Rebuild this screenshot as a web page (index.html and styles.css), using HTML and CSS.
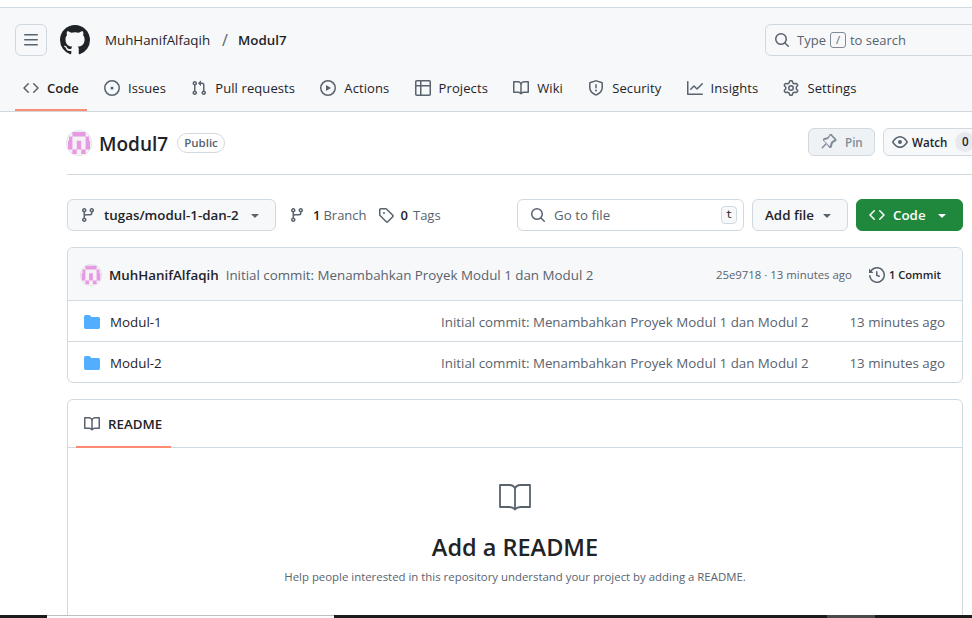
FILE: index.html
```html
<!DOCTYPE html>
<html lang="en">
  <head>
    <meta charset="UTF-8" />
    <meta name="viewport" content="width=device-width, initial-scale=1.0" />
    <title>MuhHanifAlfaqih/Modul7</title>
    <link rel="stylesheet" href="styles.css">
  </head>
  <body>
    <svg class="sprites" xmlns="http://www.w3.org/2000/svg">
      <symbol id="i-bars" viewBox="0 0 16 16"><path d="M1 2.75A.75.75 0 0 1 1.75 2h12.5a.75.75 0 0 1 0 1.5H1.75A.75.75 0 0 1 1 2.75Zm0 5A.75.75 0 0 1 1.75 7h12.5a.75.75 0 0 1 0 1.5H1.75A.75.75 0 0 1 1 7.75ZM1.75 12h12.5a.75.75 0 0 1 0 1.5H1.75a.75.75 0 0 1 0-1.5Z"/></symbol>
      <symbol id="i-github" viewBox="0 0 16 16"><path d="M8 0c4.42 0 8 3.58 8 8a8.013 8.013 0 0 1-5.45 7.59c-.4.08-.55-.17-.55-.38 0-.27.01-1.13.01-2.2 0-.75-.25-1.23-.54-1.48 1.78-.2 3.65-.88 3.65-3.95 0-.88-.31-1.59-.82-2.15.08-.2.36-1.02-.08-2.12 0 0-.67-.22-2.2.82-.64-.18-1.32-.27-2-.27-.68 0-1.36.09-2 .27-1.53-1.03-2.2-.82-2.2-.82-.44 1.1-.16 1.92-.08 2.12-.51.56-.82 1.28-.82 2.15 0 3.06 1.86 3.75 3.64 3.95-.23.2-.44.55-.51 1.07-.46.21-1.61.55-2.33-.66-.15-.24-.6-.83-1.23-.82-.67.01-.27.38.01.53.34.19.73.9.82 1.13.16.45.68 1.31 2.69.94 0 .67.01 1.3.01 1.49 0 .21-.15.45-.55.38A7.995 7.995 0 0 1 0 8c0-4.42 3.58-8 8-8Z"/></symbol>
      <symbol id="i-search" viewBox="0 0 16 16"><path d="M10.68 11.74a6 6 0 0 1-7.922-8.982 6 6 0 0 1 8.982 7.922l3.04 3.04a.749.749 0 0 1-.326 1.275.749.749 0 0 1-.734-.215ZM11.5 7a4.499 4.499 0 1 0-8.997 0A4.499 4.499 0 0 0 11.5 7Z"/></symbol>
      <symbol id="i-code" viewBox="0 0 16 16"><path d="m11.28 3.22 4.25 4.25a.75.75 0 0 1 0 1.06l-4.25 4.25a.749.749 0 0 1-1.275-.326.749.749 0 0 1 .215-.734L13.94 8l-3.72-3.72a.749.749 0 0 1 .326-1.275.749.749 0 0 1 .734.215Zm-6.56 0a.751.751 0 0 1 1.042.018.751.751 0 0 1 .018 1.042L2.06 8l3.72 3.72a.749.749 0 0 1-.326 1.275.749.749 0 0 1-.734-.215L.47 8.53a.75.75 0 0 1 0-1.06Z"/></symbol>
      <symbol id="i-issue" viewBox="0 0 16 16"><path d="M8 9.5a1.5 1.5 0 1 0 0-3 1.5 1.5 0 0 0 0 3Z"/><path d="M8 0a8 8 0 1 1 0 16A8 8 0 0 1 8 0ZM1.5 8a6.5 6.5 0 1 0 13 0 6.5 6.5 0 0 0-13 0Z"/></symbol>
      <symbol id="i-pull" viewBox="0 0 16 16"><path d="M1.5 3.25a2.25 2.25 0 1 1 3 2.122v5.256a2.251 2.251 0 1 1-1.5 0V5.372A2.25 2.25 0 0 1 1.5 3.25Zm5.677-.177L9.573.677A.25.25 0 0 1 10 .854V2.5h1A2.5 2.5 0 0 1 13.5 5v5.628a2.251 2.251 0 1 1-1.5 0V5a1 1 0 0 0-1-1h-1v1.646a.25.25 0 0 1-.427.177L7.177 3.427a.25.25 0 0 1 0-.354ZM3.75 2.5a.75.75 0 1 0 0 1.5.75.75 0 0 0 0-1.5Zm0 9.5a.75.75 0 1 0 0 1.5.75.75 0 0 0 0-1.5Zm8.25.75a.75.75 0 1 0 1.5 0 .75.75 0 0 0-1.5 0Z"/></symbol>
      <symbol id="i-play" viewBox="0 0 16 16"><path d="M8 0a8 8 0 1 1 0 16A8 8 0 0 1 8 0ZM1.5 8a6.5 6.5 0 1 0 13 0 6.5 6.5 0 0 0-13 0Zm4.879-2.773 4.264 2.559a.25.25 0 0 1 0 .428l-4.264 2.559A.25.25 0 0 1 6 10.559V5.442a.25.25 0 0 1 .379-.215Z"/></symbol>
      <symbol id="i-table" viewBox="0 0 16 16"><path d="M0 1.75C0 .784.784 0 1.75 0h12.5C15.216 0 16 .784 16 1.75v12.5A1.75 1.75 0 0 1 14.25 16H1.75A1.75 1.75 0 0 1 0 14.25ZM6.5 6.5v8h7.75a.25.25 0 0 0 .25-.25V6.5Zm8-1.5V1.75a.25.25 0 0 0-.25-.25H6.5V5Zm-13 1.5v7.75c0 .138.112.25.25.25H5v-8ZM5 5V1.5H1.75a.25.25 0 0 0-.25.25V5Z"/></symbol>
      <symbol id="i-book" viewBox="0 0 16 16"><path d="M0 1.75A.75.75 0 0 1 .75 1h4.253c1.227 0 2.317.59 3 1.501A3.743 3.743 0 0 1 11.006 1h4.245a.75.75 0 0 1 .75.75v10.5a.75.75 0 0 1-.75.75h-4.507a2.25 2.25 0 0 0-1.591.659l-.622.621a.75.75 0 0 1-1.06 0l-.622-.621A2.25 2.25 0 0 0 5.258 13H.75a.75.75 0 0 1-.75-.75Zm7.251 10.324.004-5.073-.002-2.253A2.25 2.25 0 0 0 5.003 2.5H1.5v9h3.757a3.75 3.75 0 0 1 1.994.574ZM8.755 4.75l-.004 7.322a3.752 3.752 0 0 1 1.992-.572H14.5v-9h-3.495a2.25 2.25 0 0 0-2.25 2.25Z"/></symbol>
      <symbol id="i-book-thin" viewBox="0 0 32 32"><path fill="none" stroke="currentColor" stroke-width="1.800" stroke-linejoin="round" d="M1 3h9.500c2.500 0 4.500 1 5.500 3.500C17 4 19 3 21.500 3H31v22h-9.500c-2.500 0-4 .8-5.500 2.500C14.500 25.800 13 25 10.500 25H1ZM16 6.500v21"/></symbol>
      <symbol id="i-shield" viewBox="0 0 16 16"><path d="M7.467.133a1.748 1.748 0 0 1 1.066 0l5.25 1.68A1.75 1.75 0 0 1 15 3.48V7c0 1.566-.32 3.182-1.303 4.682-.983 1.498-2.585 2.813-5.032 3.855a1.697 1.697 0 0 1-1.33 0c-2.447-1.042-4.049-2.357-5.032-3.855C1.32 10.182 1 8.566 1 7V3.48a1.75 1.75 0 0 1 1.217-1.667Zm.61 1.429a.25.25 0 0 0-.153 0l-5.25 1.68a.25.25 0 0 0-.174.238V7c0 1.358.275 2.666 1.057 3.86.784 1.194 2.121 2.34 4.366 3.297a.196.196 0 0 0 .154 0c2.245-.956 3.582-2.104 4.366-3.298C13.225 9.666 13.5 8.36 13.5 7V3.48a.251.251 0 0 0-.174-.237l-5.25-1.68ZM8.75 4.75v3a.75.75 0 0 1-1.5 0v-3a.75.75 0 0 1 1.5 0ZM9 10.5a1 1 0 1 1-2 0 1 1 0 0 1 2 0Z"/></symbol>
      <symbol id="i-graph" viewBox="0 0 16 16"><path d="M1.5 1.75V13.5h13.75a.75.75 0 0 1 0 1.5H.75a.75.75 0 0 1-.75-.75V1.75a.75.75 0 0 1 1.5 0Zm14.28 2.53-5.25 5.25a.75.75 0 0 1-1.06 0L7 7.06 4.28 9.78a.751.751 0 0 1-1.042-.018.751.751 0 0 1-.018-1.042l3.25-3.25a.75.75 0 0 1 1.06 0L10 7.94l4.72-4.72a.751.751 0 0 1 1.042.018.751.751 0 0 1 .018 1.042Z"/></symbol>
      <symbol id="i-gear" viewBox="0 0 16 16"><path d="M8 0a8.2 8.2 0 0 1 .701.031C9.444.095 9.99.645 10.16 1.29l.288 1.107c.018.066.079.158.212.224.231.114.454.243.668.386.123.082.233.09.299.071l1.103-.303c.644-.176 1.392.021 1.82.63.27.385.506.792.704 1.218.315.675.111 1.422-.364 1.891l-.814.806c-.049.048-.098.147-.088.294.016.257.016.515 0 .772-.01.147.038.246.088.294l.814.806c.475.469.679 1.216.364 1.891a7.977 7.977 0 0 1-.704 1.217c-.428.61-1.176.807-1.82.63l-1.102-.302c-.067-.019-.177-.011-.3.071a5.909 5.909 0 0 1-.668.386c-.133.066-.194.158-.211.224l-.29 1.106c-.168.646-.715 1.196-1.458 1.26a8.006 8.006 0 0 1-1.402 0c-.743-.064-1.289-.614-1.458-1.26l-.289-1.106c-.018-.066-.079-.158-.212-.224a5.738 5.738 0 0 1-.668-.386c-.123-.082-.233-.09-.299-.071l-1.103.303c-.644.176-1.392-.021-1.82-.63a8.12 8.12 0 0 1-.704-1.218c-.315-.675-.111-1.422.363-1.891l.815-.806c.05-.048.098-.147.088-.294a6.214 6.214 0 0 1 0-.772c.01-.147-.038-.246-.088-.294l-.815-.806C.635 6.045.431 5.298.746 4.623a7.92 7.92 0 0 1 .704-1.217c.428-.61 1.176-.807 1.82-.63l1.102.302c.067.019.177.011.3-.071.214-.143.437-.272.668-.386.133-.066.194-.158.211-.224l.29-1.106C6.009.645 6.556.095 7.299.03 7.53.01 7.764 0 8 0Zm-.571 1.525c-.036.003-.108.036-.137.146l-.289 1.105c-.147.561-.549.967-.998 1.189-.173.086-.34.183-.5.29-.417.278-.97.423-1.529.27l-1.103-.303c-.109-.03-.175.016-.195.045-.22.312-.412.644-.573.99-.014.031-.021.11.059.19l.815.806c.411.406.562.957.53 1.456a4.709 4.709 0 0 0 0 .582c.032.499-.119 1.05-.53 1.456l-.815.806c-.081.08-.073.159-.059.19.162.346.353.677.573.989.02.03.085.076.195.046l1.102-.303c.56-.153 1.113-.008 1.53.27.161.107.328.204.501.29.447.222.85.629.997 1.189l.289 1.105c.029.109.101.143.137.146a6.6 6.6 0 0 0 1.142 0c.036-.003.108-.036.137-.146l.289-1.105c.147-.561.549-.967.998-1.189.173-.086.34-.183.5-.29.417-.278.97-.423 1.529-.27l1.103.303c.109.029.175-.016.195-.045.22-.313.411-.644.573-.99.014-.031.021-.11-.059-.19l-.815-.806c-.411-.406-.562-.957-.53-1.456a4.709 4.709 0 0 0 0-.582c-.032-.499.119-1.05.53-1.456l.815-.806c.081-.08.073-.159.059-.19a6.464 6.464 0 0 0-.573-.989c-.02-.03-.085-.076-.195-.046l-1.102.303c-.56.153-1.113.008-1.53-.27a4.44 4.44 0 0 0-.501-.29c-.447-.222-.85-.629-.997-1.189l-.289-1.105c-.029-.11-.101-.143-.137-.146a6.6 6.6 0 0 0-1.142 0ZM11 8a3 3 0 1 1-6 0 3 3 0 0 1 6 0ZM9.500 8a1.500 1.500 0 1 0-3.001.001A1.500 1.500 0 0 0 9.500 8Z"/></symbol>
      <symbol id="i-pin" viewBox="0 0 16 16"><path d="m11.294.984 3.722 3.722a1.75 1.75 0 0 1-.504 2.826l-1.327.613a3.089 3.089 0 0 0-1.707 2.084l-.584 2.454c-.317 1.332-1.972 1.8-2.94.832L5.75 10.311 1.78 14.28a.749.749 0 0 1-1.275-.326.749.749 0 0 1 .215-.734L4.69 9.25 2.487 7.046c-.968-.968-.5-2.623.832-2.94l2.454-.584a3.09 3.09 0 0 0 2.084-1.707l.613-1.327a1.75 1.75 0 0 1 2.824-.504Zm-1.72.63a.25.25 0 0 0-.401.072l-.614 1.327a4.59 4.59 0 0 1-3.096 2.536l-2.454.584a.25.25 0 0 0-.119.42l5.56 5.56a.25.25 0 0 0 .42-.119l.584-2.454a4.59 4.59 0 0 1 2.536-3.096l1.327-.614a.25.25 0 0 0 .072-.401l-3.815-3.815Z"/></symbol>
      <symbol id="i-eye" viewBox="0 0 16 16"><path d="M8 2c1.981 0 3.671.992 4.933 2.078 1.27 1.091 2.187 2.345 2.637 3.023a1.62 1.62 0 0 1 0 1.798c-.45.678-1.367 1.932-2.637 3.023C11.67 13.008 9.981 14 8 14c-1.981 0-3.671-.992-4.933-2.078C1.797 10.83.88 9.576.43 8.898a1.62 1.62 0 0 1 0-1.798c.45-.677 1.367-1.931 2.637-3.022C4.33 2.992 6.019 2 8 2ZM1.679 7.932a.12.12 0 0 0 0 .136c.411.622 1.241 1.75 2.366 2.717C5.176 11.758 6.527 12.5 8 12.5c1.473 0 2.825-.742 3.955-1.715 1.124-.967 1.954-2.096 2.366-2.717a.12.12 0 0 0 0-.136c-.412-.621-1.242-1.75-2.366-2.717C10.824 4.242 9.473 3.5 8 3.5c-1.473 0-2.825.742-3.955 1.715-1.124.967-1.954 2.096-2.366 2.717ZM8 10a2 2 0 1 1-.001-3.999A2 2 0 0 1 8 10Z"/></symbol>
      <symbol id="i-branch" viewBox="0 0 16 16"><path d="M9.5 3.25a2.25 2.25 0 1 1 3 2.122V6A2.5 2.5 0 0 1 10 8.5H6a1 1 0 0 0-1 1v1.128a2.251 2.251 0 1 1-1.5 0V5.372a2.25 2.25 0 1 1 1.5 0v1.836A2.493 2.493 0 0 1 6 7h4a1 1 0 0 0 1-1v-.628A2.25 2.25 0 0 1 9.5 3.25Zm-6 0a.75.75 0 1 0 1.5 0 .75.75 0 0 0-1.5 0Zm8.25-.75a.75.75 0 1 0 0 1.5.75.75 0 0 0 0-1.5ZM4.25 12a.75.75 0 1 0 0 1.5.75.75 0 0 0 0-1.5Z"/></symbol>
      <symbol id="i-tag" viewBox="0 0 16 16"><path d="M1 7.775V2.75C1 1.784 1.784 1 2.75 1h5.025c.464 0 .91.184 1.238.513l6.25 6.25a1.75 1.75 0 0 1 0 2.474l-5.026 5.026a1.75 1.75 0 0 1-2.474 0l-6.25-6.25A1.752 1.752 0 0 1 1 7.775Zm1.5 0c0 .066.026.13.073.177l6.25 6.25a.25.25 0 0 0 .354 0l5.025-5.025a.25.25 0 0 0 0-.354l-6.25-6.25a.25.25 0 0 0-.177-.073H2.75a.25.25 0 0 0-.25.25ZM6 5a1 1 0 1 1 0 2 1 1 0 0 1 0-2Z"/></symbol>
      <symbol id="i-history" viewBox="0 0 16 16"><path d="m.427 1.927 1.215 1.215a8.002 8.002 0 1 1-1.6 5.685.75.75 0 1 1 1.493-.154 6.5 6.5 0 1 0 1.18-4.458l1.358 1.358A.25.25 0 0 1 3.896 6H.25A.25.25 0 0 1 0 5.75V2.104a.25.25 0 0 1 .427-.177ZM7.75 4a.75.75 0 0 1 .75.75v2.992l2.028.812a.75.75 0 0 1-.557 1.392l-2.5-1A.751.751 0 0 1 7 8.25v-3.5A.75.75 0 0 1 7.75 4Z"/></symbol>
      <symbol id="i-folder" viewBox="0 0 16 16"><path d="M1.75 1A1.75 1.75 0 0 0 0 2.75v10.5C0 14.216.784 15 1.75 15h12.5A1.75 1.75 0 0 0 16 13.25v-8.5A1.75 1.75 0 0 0 14.25 3H7.5a.25.25 0 0 1-.2-.1l-.9-1.2C6.07 1.26 5.55 1 5 1H1.75Z"/></symbol>
      <symbol id="i-caret" viewBox="0 0 16 16"><path d="m4.427 7.427 3.396 3.396a.25.25 0 0 0 .354 0l3.396-3.396A.25.25 0 0 0 11.396 7H4.604a.25.25 0 0 0-.177.427Z"/></symbol>
      <symbol id="i-avatar" viewBox="0 0 26 26">
        <circle cx="13" cy="13" r="13" fill="#e2e2e2"/>
        <circle cx="13" cy="13" r="12.200" fill="#f4f2f4"/>
        <path fill="#e79ae4" d="M6.400 2h13.200v4.400H6.400ZM3 6.400h3.400v4.400H3Zm16.600 0H23v4.400h-3.400ZM2 10.800h4.400v8.800H2Zm8.800 0h4.400v8.800h-4.400Zm8.800 0H24v8.800h-4.400ZM6.400 19.600h4.400V24H6.400Zm8.800 0h4.400V24h-4.400Z"/>
      </symbol>
    </svg>

    <div class="top-gap"></div>

    <header class="app-header">
      <div class="top-row">
        <button class="icon-btn"><svg class="icon"><use href="#i-bars"/></svg></button>
        <svg class="logo"><use href="#i-github"/></svg>
        <a class="crumb">MuhHanifAlfaqih</a>
        <span class="crumb-sep">/</span>
        <a class="crumb current">Modul7</a>
        <div class="global-search">
          <svg class="icon"><use href="#i-search"/></svg>
          <span>Type</span>
          <kbd class="slash-key">/</kbd>
          <span>to search</span>
        </div>
      </div>
      <nav class="repo-nav">
        <a class="tab selected"><svg class="icon"><use href="#i-code"/></svg>Code</a>
        <a class="tab"><svg class="icon"><use href="#i-issue"/></svg>Issues</a>
        <a class="tab"><svg class="icon"><use href="#i-pull"/></svg>Pull requests</a>
        <a class="tab"><svg class="icon"><use href="#i-play"/></svg>Actions</a>
        <a class="tab"><svg class="icon"><use href="#i-table"/></svg>Projects</a>
        <a class="tab"><svg class="icon"><use href="#i-book"/></svg>Wiki</a>
        <a class="tab"><svg class="icon"><use href="#i-shield"/></svg>Security</a>
        <a class="tab"><svg class="icon"><use href="#i-graph"/></svg>Insights</a>
        <a class="tab"><svg class="icon"><use href="#i-gear"/></svg>Settings</a>
      </nav>
    </header>

    <main class="repo">
      <div class="repo-head">
        <svg class="avatar"><use href="#i-avatar"/></svg>
        <h1 class="repo-name">Modul7</h1>
        <span class="label">Public</span>
        <div class="head-actions">
          <button class="btn small disabled"><svg class="icon"><use href="#i-pin"/></svg>Pin</button>
          <button class="btn small watch"><svg class="icon"><use href="#i-eye"/></svg>Watch<span class="counter">0</span></button>
        </div>
      </div>

      <div class="content">
        <div class="toolbar">
          <button class="btn branch-btn">
            <svg class="icon"><use href="#i-branch"/></svg>
            <span>tugas/modul-1-dan-2</span>
            <svg class="icon caret"><use href="#i-caret"/></svg>
          </button>
          <a class="stat branches"><svg class="icon"><use href="#i-branch"/></svg><b>1</b> Branch</a>
          <a class="stat"><svg class="icon"><use href="#i-tag"/></svg><b>0</b> Tags</a>
          <div class="file-search">
            <svg class="icon"><use href="#i-search"/></svg>
            <span>Go to file</span>
            <kbd class="t-key">t</kbd>
          </div>
          <button class="btn add-file">Add file<svg class="icon caret"><use href="#i-caret"/></svg></button>
          <button class="btn code-btn"><svg class="icon"><use href="#i-code"/></svg>Code<svg class="icon caret"><use href="#i-caret"/></svg></button>
        </div>

        <div class="box files">
          <div class="commit-bar">
            <svg class="avatar tiny"><use href="#i-avatar"/></svg>
            <a class="author">MuhHanifAlfaqih</a>
            <span class="commit-msg">Initial commit: Menambahkan Proyek Modul 1 dan Modul 2</span>
            <span class="commit-meta">25e9718 · 13 minutes ago</span>
            <a class="commit-count"><svg class="icon"><use href="#i-history"/></svg>1 Commit</a>
          </div>
          <div class="file-row">
            <a class="file-name"><svg class="icon"><use href="#i-folder"/></svg>Modul-1</a>
            <span class="muted">Initial commit: Menambahkan Proyek Modul 1 dan Modul 2</span>
            <span class="muted">13 minutes ago</span>
          </div>
          <div class="file-row">
            <a class="file-name"><svg class="icon"><use href="#i-folder"/></svg>Modul-2</a>
            <span class="muted">Initial commit: Menambahkan Proyek Modul 1 dan Modul 2</span>
            <span class="muted">13 minutes ago</span>
          </div>
        </div>

        <div class="box readme">
          <div class="readme-tabs">
            <a class="readme-tab"><svg class="icon"><use href="#i-book"/></svg>README</a>
          </div>
          <div class="readme-body">
            <svg class="big-book"><use href="#i-book-thin"/></svg>
            <h2>Add a README</h2>
            <p>Help people interested in this repository understand your project by adding a README.</p>
          </div>
        </div>
      </div>
    </main>

    <div class="taskbar">
      <div class="task-window"></div>
      <div class="task-fill"></div>
      <div class="task-thumb"></div>
    </div>
  </body>
</html>
```

FILE: styles.css
```css
* {
  box-sizing: border-box;
  margin: 0;
  padding: 0;
}

html,
body {
  height: 100%;
  overflow: hidden;
}

body {
  display: flex;
  flex-direction: column;
  background-color: #fff;
  color: #1f2328;
  font-family: "Open Sans", "Noto Sans", sans-serif;
  font-size: 13.35px;
}

button {
  font-family: inherit;
  color: inherit;
}

.sprites {
  display: none;
}

.icon {
  width: 16px;
  height: 16px;
  flex: none;
  fill: #59636e;
}

.top-gap {
  height: 8px;
  flex: none;
  border-bottom: 1px solid #d1d9e0;
}

/* header */
.app-header {
  flex: none;
  height: 104px;
  overflow: hidden;
  background-color: #f6f8fa;
  border-bottom: 1px solid #d1d9e0;
}

.top-row {
  display: flex;
  align-items: center;
  width: 1040px;
  height: 32px;
  margin-top: 16px;
  padding-left: 15px;
}

.icon-btn {
  display: flex;
  align-items: center;
  justify-content: center;
  width: 32px;
  height: 32px;
  background: transparent;
  border: 1px solid #d1d9e0;
  border-radius: 6px;
}

.logo {
  width: 30px;
  height: 30px;
  margin-left: 13px;
  fill: #1f2328;
}

.crumb {
  margin-left: 15px;
  white-space: nowrap;
}

.crumb-sep {
  margin: 0 10px 0 12px;
  color: #59636e;
  font-size: 16px;
}

.crumb.current {
  margin-left: 0;
  font-weight: 600;
}

.global-search {
  display: flex;
  align-items: center;
  gap: 4px;
  width: 275px;
  height: 32px;
  margin-left: auto;
  padding-left: 8px;
  font-size: 13px;
  color: #59636e;
  border: 1px solid #d1d9e0;
  border-radius: 6px;
}

.global-search .icon {
  margin-right: 3px;
}

.slash-key {
  width: 16px;
  height: 16px;
  font-family: inherit;
  font-size: 11px;
  line-height: 14px;
  text-align: center;
  border: 1px solid #818b98;
  border-radius: 3px;
}

.repo-nav {
  display: flex;
  margin-top: 9px;
  padding-left: 15px;
  gap: 9.2px;
}

.tab {
  display: flex;
  align-items: center;
  gap: 8px;
  height: 46px;
  padding: 2px 8px 0;
  font-size: 13px;
  letter-spacing: 0.1px;
  border-bottom: 2px solid transparent;
  white-space: nowrap;
}

.tab.selected {
  font-weight: 600;
  letter-spacing: 0;
  border-bottom-color: #fd8c73;
}

/* repo title row */
.repo {
  flex: 1;
  min-height: 0;
  overflow: hidden;
  padding-left: 67px;
}

.repo-head {
  display: flex;
  align-items: center;
  width: 915px;
  padding: 16px 0 18px;
  border-bottom: 1px solid #d1d9e0;
}

.avatar {
  width: 26px;
  height: 26px;
  flex: none;
  margin: 2px 0 0 -1px;
}

.repo-name {
  margin: 4px 0 0 7px;
  font-size: 19px;
  font-weight: 600;
  line-height: 24px;
}

.label {
  margin: 2px 0 0 9px;
  padding: 0 6px;
  font-size: 11.5px;
  font-weight: 600;
  line-height: 18px;
  color: #59636e;
  border: 1px solid #d1d9e0;
  border-radius: 10px;
}

.head-actions {
  display: flex;
  gap: 8px;
  margin-left: auto;
}

/* buttons */
.btn {
  display: flex;
  align-items: center;
  height: 32px;
  font-size: 13.35px;
  font-weight: 600;
  white-space: nowrap;
  background-color: #f6f8fa;
  border: 1px solid #d1d9e0;
  border-radius: 6px;
}

.btn.small {
  height: 28px;
  font-size: 11.6px;
}

.btn.disabled {
  width: 67px;
  gap: 8px;
  padding-left: 12px;
  color: #818b98;
  background-color: #eff2f5;
}

.btn.disabled .icon {
  fill: #818b98;
}

.btn.watch {
  width: 99px;
  gap: 4px;
  padding-left: 8px;
}

.counter {
  display: inline-block;
  width: 20px;
  height: 20px;
  margin-left: 4px;
  line-height: 20px;
  text-align: center;
  background-color: #e6eaef;
  border-radius: 10px;
}

.content {
  width: 896px;
}

/* toolbar */
.toolbar {
  display: flex;
  align-items: center;
  margin-top: 24px;
}

.branch-btn {
  width: 209px;
  padding-left: 12px;
  gap: 8px;
}

.caret {
  margin-left: auto;
}

.branch-btn .caret {
  margin-right: 12px;
}

.stat {
  display: flex;
  align-items: center;
  gap: 5px;
  margin-left: 11px;
  font-size: 13px;
  white-space: nowrap;
  color: #59636e;
}

.stat b {
  font-weight: 600;
  color: #1f2328;
  margin-left: 2px;
}

.stat.branches {
  gap: 3px;
  margin-left: 13px;
}

.stat.branches b {
  margin-left: 5px;
}

.file-search {
  display: flex;
  align-items: center;
  gap: 8px;
  width: 227px;
  height: 32px;
  margin-left: auto;
  padding: 0 6px 0 12px;
  color: #59636e;
  border: 1px solid #d1d9e0;
  border-radius: 6px;
}

.t-key {
  width: 16px;
  height: 18px;
  margin-left: auto;
  font-family: "DejaVu Sans Mono", monospace;
  font-size: 11px;
  line-height: 16px;
  text-align: center;
  color: #1f2328;
  background-color: #f6f8fa;
  border: 1px solid #d1d9e0;
  border-radius: 4px;
}

.add-file {
  width: 96px;
  margin-left: 8px;
  padding: 0 12px;
}

.code-btn {
  width: 107px;
  margin-left: 8px;
  padding: 0 12px;
  gap: 8px;
  color: #fff;
  background-color: #1f883d;
  border-color: #1f883d;
}

.code-btn .icon {
  fill: #fff;
}

/* file list */
.box {
  border: 1px solid #d1d9e0;
  border-radius: 6px;
}

.files {
  margin-top: 16px;
}

.commit-bar {
  display: flex;
  align-items: center;
  height: 53px;
  padding: 1px 21px 0 12px;
  background-color: #f6f8fa;
  border-bottom: 1px solid #d1d9e0;
  border-radius: 6px 6px 0 0;
}

.avatar.tiny {
  width: 22px;
  height: 22px;
  margin: 0;
}

.author {
  margin-left: 7px;
  font-weight: 600;
}

.commit-msg {
  margin-left: 7px;
  color: #59636e;
}

.commit-meta {
  margin-left: auto;
  font-size: 11.4px;
  color: #59636e;
}

.commit-count {
  display: flex;
  align-items: center;
  gap: 4px;
  margin-left: 17px;
  font-size: 11.2px;
  font-weight: 600;
}

.file-row {
  display: grid;
  grid-template-columns: 357px 1fr auto;
  align-items: center;
  height: 41px;
  padding: 1px 17px 0 16px;
  border-bottom: 1px solid #d1d9e0;
}

.file-row:last-child {
  height: 40px;
  border-bottom: none;
}

.file-name {
  display: flex;
  align-items: center;
  gap: 10px;
}

.file-name .icon {
  fill: #54aeff;
}

.muted {
  color: #59636e;
}

/* readme */
.readme {
  height: 230px;
  margin-top: 16px;
}

.readme-tabs {
  height: 48px;
  padding-left: 8px;
  border-bottom: 1px solid #d1d9e0;
}

.readme-tab {
  display: flex;
  align-items: center;
  gap: 8px;
  width: 95px;
  height: 48px;
  padding: 2px 0 0 8px;
  font-weight: 600;
  border-bottom: 2px solid #fd8c73;
}

.readme-body {
  display: flex;
  flex-direction: column;
  align-items: center;
  padding-top: 34px;
}

.big-book {
  width: 32px;
  height: 32px;
  color: #59636e;
}

.readme-body h2 {
  margin-top: 18px;
  font-size: 23.5px;
  font-weight: 600;
  line-height: 30px;
}

.readme-body p {
  margin-top: 6px;
  font-size: 11.4px;
  line-height: 18px;
  color: #59636e;
}

/* strip at the very bottom of the capture */
.taskbar {
  display: flex;
  flex: none;
  height: 3px;
  padding: 0 97px 0 47px;
  background-color: #1c1c1c;
}

.task-window {
  width: 287px;
  background-color: #fff;
  border-top: 1px solid #bdbdbd;
}

.task-fill {
  flex: 1;
}

.task-thumb {
  width: 48px;
  background-color: #4a4a4a;
}
```
